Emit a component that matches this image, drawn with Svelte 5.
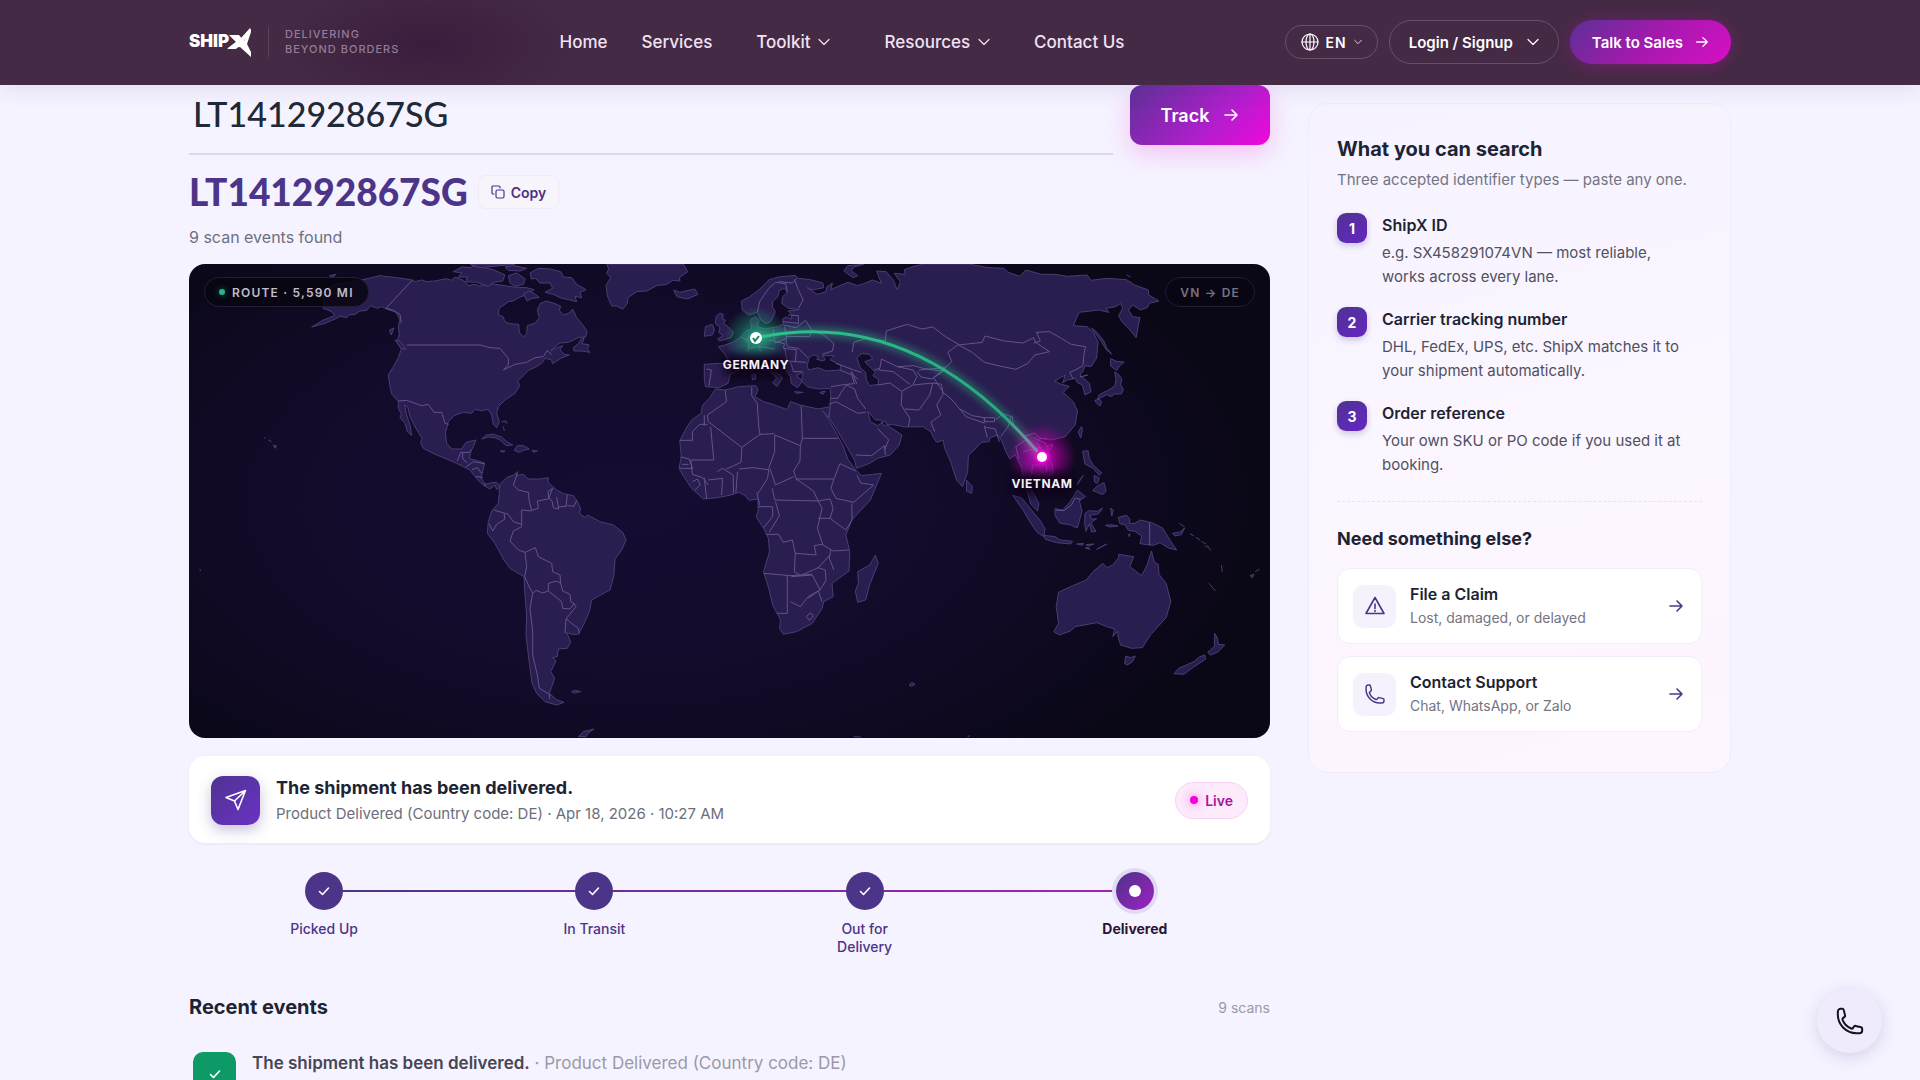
<script>
    let trackingId = $state('LT141292867SG');
    let copied = $state(false);

    const events = [
        { id: 1, title: 'The shipment has been delivered.', detail: 'Product Delivered (Country code: DE)' }
    ];

    const searchTypes = [
        { title: 'ShipX ID', text: 'e.g. SX458291074VN — most reliable, works across every lane.' },
        { title: 'Carrier tracking number', text: 'DHL, FedEx, UPS, etc. ShipX matches it to your shipment automatically.' },
        { title: 'Order reference', text: 'Your own SKU or PO code if you used it at booking.' }
    ];

    const help = [
        { title: 'File a Claim', text: 'Lost, damaged, or delayed', icon: 'alert' },
        { title: 'Contact Support', text: 'Chat, WhatsApp, or Zalo', icon: 'phone' }
    ];

    const steps = [
        { label: 'Picked Up', done: true },
        { label: 'In Transit', done: true },
        { label: 'Out for Delivery', done: true },
        { label: 'Delivered', done: false }
    ];

    // each part of the world is drawn on its own grid and placed by a transform
    const world = [
        {
            name: 'americas',
            place: 'translate(-9 -9) scale(.33333)',
            land: [
                'M440 100 470 88 540 76 600 62 650 68 697 75 705 80 725 75 740 80 765 78 800 71 815 76 824 66 850 76 866 92 885 88 900 94 922 84 960 90 1000 96 1040 98 1062 104 1050 116 1020 126 1000 138 985 140 958 160 954 178 970 186 974 200 990 206 1016 208 1018 232 1030 246 1040 236 1042 212 1066 204 1078 188 1072 165 1082 145 1100 138 1125 146 1142 154 1138 166 1150 180 1168 174 1178 162 1190 188 1205 206 1221 228 1218 245 1195 248 1165 262 1140 264 1125 275 1112 287 1130 278 1148 272 1140 284 1152 298 1168 300 1142 310 1118 326 1114 314 1095 310 1085 325 1060 340 1045 346 1030 362 1012 378 1020 390 1005 415 975 435 955 455 950 475 958 500 950 518 940 507 935 480 925 463 905 467 885 463 875 475 850 472 822 482 805 500 796 535 800 565 815 582 845 582 858 562 888 555 880 575 872 590 868 612 885 615 914 624 908 650 903 668 915 688 935 683 950 682 962 695 950 703 945 690 930 702 912 692 898 680 885 665 870 645 850 635 830 625 800 612 770 600 730 580 722 565 726 550 705 515 690 485 683 455 674 450 680 480 690 510 695 541 682 530 675 505 660 488 664 478 655 460 655 440 636 418 630 395 625 360 640 335 655 308 664 282 650 262 658 240 655 212 660 195 648 172 620 162 605 155 590 160 572 152 560 166 540 168 525 178 505 180 500 188 480 184 470 190 435 205 395 216 430 195 465 182 455 170 430 160 430 120Z',
                'M820 50 845 36 870 38 885 32 940 44 975 60 968 78 940 82 925 94 890 82 858 80 862 66 835 66 846 54Z',
                'M1050 54 1075 40 1110 42 1142 50 1150 66 1175 68 1190 88 1218 104 1200 112 1205 128 1185 124 1190 140 1165 134 1140 128 1120 118 1095 112 1118 100 1110 84 1080 84 1066 70 1054 72Z',
                'M985 62 1010 54 1036 72 1030 88 1005 94 990 84Z',
                'M1030 118 1048 108 1066 118 1078 128 1055 130 1042 138Z',
                'M975 36 1000 32 1040 40 1020 48 985 46Z',
                'M870 28 900 38 960 32 1005 28Z',
                'M1280 27 1286 42 1280 55 1292 68 1286 78 1278 92 1282 122 1295 153 1310 153 1328 163 1342 145 1344 128 1370 110 1400 108 1430 92 1460 88 1478 76 1500 78 1498 68 1523 50 1510 27Z',
                'M1180 278 1195 266 1204 252 1213 248 1206 266 1228 270 1222 280 1230 292 1205 288 1182 288Z',
                'M645 255 662 260 678 284 664 280Z',
                'M628 225 642 219 638 228 634 240Z',
                'M448 62 468 58 460 66Z',
                'M905 552 918 540 940 538 965 546 980 560 998 570 978 572 962 556 945 548 925 546Z',
                'M1003 586 1012 572 1030 572 1048 582 1030 586 1018 592Z',
                'M960 587 975 588 968 592Z M1057 586 1072 588 1060 592Z',
                'M965 500 978 498 982 506 M970 515 973 528 M252 548 256 550 M265 555 275 560 M280 570 290 573 285 580Z M60 942 61 948',
                'M958 700 960 688 980 668 1000 660 1014 650 1008 662 1030 658 1045 672 1080 672 1105 668 1104 682 1130 705 1150 716 1180 722 1195 745 1202 762 1198 775 1215 788 1222 780 1260 800 1300 810 1328 832 1338 855 1325 885 1305 912 1302 960 1290 1005 1265 1018 1235 1035 1228 1070 1210 1110 1195 1138 1175 1138 1160 1132 1172 1160 1162 1180 1135 1182 1132 1205 1118 1208 1128 1218 1112 1250 1124 1270 1114 1298 1108 1315 1130 1334 1152 1342 1130 1350 1095 1340 1070 1315 1056 1284 1050 1240 1045 1200 1038 1140 1040 1080 1035 1020 1032 965 990 940 972 915 945 865 922 835 925 800 935 768 955 745 958 715Z',
                'M1175 1310 1185 1306 1202 1310 1180 1314Z',
                'M1195 1445 1210 1430 1242 1422 1225 1434 1218 1445Z'
            ],
            borders: [
                'M697 75 618 160 640 166 660 178 664 205',
                'M680 270H900L930 278 960 280 985 310 985 330 970 345 1005 328 1040 322 1065 308 1090 305 1102 286 1115 300',
                'M655 438 680 436 725 452 745 448 762 472 785 472 795 505 806 508',
                'M832 618 842 592 868 592 875 585M848 592 V612L862 624M858 636 880 620 912 626M876 644 892 638 905 655M888 664 908 668M915 685V692',
                'M1012 655 1000 690 1015 705 1045 712 1048 740 1055 766 1075 760 1072 738 1105 732 1118 700',
                'M1118 700 1104 710 1106 728 1116 738 1120 758 1136 762 1130 726M1136 756 1158 754 1162 720M1162 752 1182 754 1190 736',
                'M1055 768 1025 765 1025 815 1000 828 990 858 1015 885 1035 892 1066 878 1075 905 1115 925 1118 950 1140 960 1142 985',
                'M942 765 985 778 1000 800 1025 808M928 806 938 828 950 808 975 792 972 776',
                'M1035 892 1040 935 1034 965 1045 990 1058 1015 1050 1060 1058 1130 1058 1200 1072 1260 1078 1300 1112 1320',
                'M1058 1015 1068 1006 1088 1014 1105 1008 1105 985 1130 978 1142 985 1148 1008 1170 1018 1172 1040 1182 1046 1170 1062 1148 1060 1145 1040 1105 1008',
                'M1182 1046 1188 1055 1158 1092 1195 1120 1198 1136M1158 1092 1155 1135M1108 1318V1332'
            ]
        },
        {
            name: 'old-world',
            place: 'translate(471 -9) scale(.39541 .33333)',
            land: [
                // Europe and Asia, with the Black and Caspian seas cut out
                'M112 328 150 325 178 328 165 300 148 275 165 270 185 262 205 245 218 228 232 222 228 195 240 185 250 195 246 215 265 222 300 215 312 205 310 192 320 186 332 192 334 178 324 168 352 164 325 160 308 145 310 125 322 112 315 100 302 106 298 125 285 140 284 155 292 170 284 190 280 200 268 206 255 195 246 172 225 180 208 165 206 138 226 126 250 105 275 75 300 66 342 61 350 70 380 74 412 84 414 98 385 105 372 98 388 110 398 118 420 110 422 96 436 84 432 104 455 92 475 82 500 92 520 84 538 75 560 85 552 62 548 48 572 50 590 75 600 105 608 80 592 55 620 58 618 44 640 35 665 27H780L830 38 870 40 880 52 910 64 925 45 965 58 1000 58 1030 64 1080 60 1090 76 1130 70 1180 74 1200 90 1235 105 1236 120 1262 138 1238 145 1232 158 1215 165 1195 150 1185 165 1195 185 1214 188 1210 210 1204 248 1185 220 1168 200 1160 182 1170 160 1165 145 1152 155 1128 160 1135 172 1110 165 1060 172 1045 212 1080 215 1096 232 1108 262 1104 310 1090 335 1075 332 1070 348 1062 360 1086 385 1090 410 1075 420 1068 390 1055 382 1050 370 1030 375 1018 384 1025 360 998 378 1015 388 1035 394 1020 412 1045 440 1056 468 1050 510 1025 545 990 555 965 550 955 560 970 595 992 625 995 655 970 672 955 662 940 655 930 690 948 722 958 745 955 768 938 748 930 715 918 680 915 640 905 615 898 600 885 612 875 590 865 560 855 540 835 548 832 560 812 562 795 585 780 600 778 650 765 695 750 675 735 620 720 580 716 555 700 562 690 545 685 530 665 515 620 516 585 508 565 512 560 495 545 495 525 468 532 500 550 512 568 498 580 515 612 540 605 570 582 600 550 610 530 625 497 640 492 615 470 570 450 530 428 488 430 455 432 420 430 400 400 402 372 395 358 378 362 352 345 362 360 378 348 398 332 385 330 365 318 345 300 338 292 350 310 368 296 394 285 384 295 370 280 350 255 335 240 340 200 345 178 358 172 385 150 398 115 395 112 370Z' +
                'M372 332 378 305 390 300 402 306 396 312 410 318 418 314 412 302 440 302 430 314 458 332 455 345 420 348 400 338 376 345Z' +
                'M498 308 510 296 530 298 538 312 518 320 545 352 538 362 552 372 552 388 530 392 522 376 520 352 506 338Z',
                'M430 455 400 462 355 450 330 440 322 464 290 450 262 440 240 425 248 405 242 392 200 395 165 405 140 402 125 430 108 450 104 475 80 495 66 520 50 558 54 605 48 640 60 665 80 700 110 732 145 728 180 720 200 712 215 722 225 736 248 732 248 770 243 785 262 820 274 850 277 890 262 950 275 1000 285 1050 305 1095 302 1120 312 1138 345 1130 385 1105 410 1060 414 1040 438 1025 435 985 478 948 480 890 470 840 485 795 532 735 560 655 510 662 495 645 475 612 462 570 430 500 410 465 426 488Z',
                'M545 900 552 925 530 990 520 1035 500 1042 494 1008 502 985 500 950 530 930Z',
                'M35 105 50 112 88 102 96 118 70 132 44 126 38 114Z',
                'M150 175 160 178 158 192 166 196 160 205 172 215 186 232 180 248 150 258 146 252 160 242 148 232 152 218 140 205 142 185Z',
                'M115 215 132 208 138 225 132 240 112 244Z',
                'M515 28 490 36 484 48 500 62 488 68 465 48 475 32Z',
                'M775 675 790 695 788 715 775 708Z',
                'M340 410 362 412 345 415Z M404 412 418 408 412 418Z M232 360 242 358 242 372 234 374Z',
                'M1008 1012 1038 995 1078 975 1095 950 1120 925 1130 938 1145 930 1160 908 1160 898 1198 905 1188 935 1218 962 1232 930 1243 888 1250 922 1260 928 1262 958 1280 985 1292 1040 1280 1088 1240 1140 1220 1178 1192 1180 1165 1170 1158 1145 1158 1128 1145 1145 1150 1122 1130 1115 1105 1103 1050 1115 1038 1128 1010 1140 996 1130 1008 1105 1002 1055Z',
                'M1178 1203 1190 1208 1202 1203 1195 1220 1182 1230 1175 1226Z',
                'M1403 1135 1410 1150 1412 1168 1428 1170 1410 1192 1392 1200 1385 1192 1402 1175Z',
                'M1378 1200 1380 1212 1345 1240 1325 1258 1300 1256 1312 1240 1350 1220 1365 1205Z',
                'M1388 985 1405 1008 M1420 930 1422 950 M1492 962 1502 958 1498 968Z M1505 950 1516 943 M630 1290 637 1282 645 1288 635 1294Z M490 1445 508 1446 M778 1445 784 1442',
                'M1180 60 1190 66'
            ],
            borders: [
                // Europe
                'M246 172 252 140 275 100 292 82 318 86 322 112M300 80 335 84 345 70M340 74 350 105 362 135 350 160M118 342 130 345 124 392',
                'M325 180 350 182 350 205 310 200M312 210 345 218 368 196 385 228 378 245 318 244M315 215 320 250 290 264M385 228 412 238 440 266 436 288 410 298M318 252 322 275 350 280 374 308',
                'M275 255 315 266 312 280 345 284 342 322M315 278 322 318 370 322M225 240 218 262M286 222 290 256M205 246 226 258 222 290M330 320 338 350 360 350M222 280 250 275 290 282M250 275 255 290',
                // Middle East
                'M432 395 472 388 492 386 485 360 455 345M445 325 490 345 510 352M480 350 502 374M485 350 498 388M432 430 450 430 458 412 472 390M472 390 492 402 500 430 520 462M428 448 445 440 500 475 520 472M495 600 535 602 568 572 570 600M550 520 578 555 568 585',
                // Central and South Asia
                'M550 390 582 384 612 410 610 450 632 490 628 515M612 408 640 390 690 384 682 420 655 465 620 462M552 345 590 350 632 388M486 292 490 262 522 250 570 258 572 228 625 208 662 222 690 216 722 245 755 268 728 292 738 320 712 348 665 340 642 332 600 335 560 312 556 340 542 345M655 345 722 338 688 372 660 366 650 350M600 335 640 345 650 365 640 388',
                'M690 384 712 388 716 418 700 450 710 480 685 502 695 530M722 345 692 368 718 415 735 430 758 462M758 462 790 482 820 488 820 504 775 486ZM820 488H846V500H822ZM820 512 828 548M820 516 848 522 858 560',
                'M848 495 868 476 888 485 880 515 862 545M890 482 895 515 922 548M908 612 900 575 925 555M922 545 935 575 950 600M918 590 962 578M945 548 975 565 988 612M940 655 942 630 978 630 978 650M918 545 948 534 960 550 980 552',
                // China, Mongolia, Korea
                'M755 270 815 262 822 243 870 258 918 264 945 248 950 262 985 290 948 300 930 325 900 343 855 332 820 322 790 292Z',
                'M945 264 962 258 952 232 985 230 1018 252 1040 268 1076 275 1072 300 1070 330M1070 332 1050 345 1036 352 1045 372M1062 366 1082 360',
                // Africa
                'M165 405 168 440 120 480 122 500 207 577 253 538 290 536M232 396 232 422 246 445 250 520 253 538M50 556H82V530L100 508H120M112 480 112 512M128 515 136 615H78M207 577 205 622 168 642',
                'M290 540 355 572 360 550 357 452M360 550H450M355 572 354 618 338 648 346 676M290 540 290 590 275 640M200 642 235 638 275 644 272 670 248 715M278 640 292 690 338 665M284 700 290 735 400 738 388 708 345 672 440 672 455 626 495 648',
                'M440 672 432 700 445 730 490 742 540 690 508 684 498 660M485 745 486 795 470 825 430 790 438 760 430 732 400 738 410 760 398 820M400 790H430M398 820 412 870 438 888 478 885M292 740 302 782 276 832M270 838H300L312 862 335 855 342 895 395 900 390 872 412 868',
                'M262 955 330 962 385 958M342 895 340 950 355 962 400 938 430 900M432 885 428 910 440 945M400 938 418 945 420 975 405 1005M322 962V1075H296M332 965 385 960 405 1005 375 1025 355 1055 330 1040M375 1030 400 1008 410 1040M370 1085 380 1074 388 1082 378 1096Z',
                'M52 606 74 612 82 640 50 640M78 615 82 658 108 668 122 690M82 680 95 672 102 690 88 705M112 668 118 732M122 675 158 670 156 720M145 650 158 640 185 660 186 715M196 650 192 712M248 755H285V785L262 818M56 628H72M245 712 252 750'
            ]
        },
        {
            name: 'pacific',
            place: 'translate(771 -2) scale(.33333)',
            land: [
                'M395 198 412 212 432 238 440 258 455 276 438 262 425 240Z',
                'M452 290 470 298 492 300 478 312 470 326 452 312Z',
                'M464 330 478 340 485 352 482 368 490 384 484 396 462 396 455 404 440 398 425 406 412 412 418 398 442 386 465 372 468 350Z',
                'M404 415 418 412 424 420 420 432 410 424Z',
                'M355 510 364 494 368 502 362 528Z M262 552 278 546 276 558 268 564Z',
                'M368 568 384 566 388 590 400 610 425 632 418 640 398 618 375 606Z',
                'M402 640 418 648 412 664 404 660Z M398 686 412 672 432 662 438 688 428 698 410 690Z M370 640 352 668 360 652Z',
                'M285 740 308 744 330 720 352 684 376 704 358 716 366 748 352 798 330 788 300 784 285 760Z',
                'M158 700 185 708 215 745 240 775 255 800 252 824 232 812 210 780 190 745Z',
                'M250 820 285 824 300 834 338 838 332 846 290 842 256 832Z',
                'M375 754 388 746 412 748 428 738 415 756 388 760 396 772 410 770 392 782 408 808 395 810 388 785 378 808 374 785Z',
                'M475 766 500 760 510 772 508 784 525 784 540 774 575 782 608 798 618 815 632 838 650 864 625 858 600 842 580 850 540 845 545 822 525 808 505 805 495 788 480 785Z',
                'M638 814 660 810 674 798 664 818 645 822Z M452 738 460 745 455 762Z M436 790 452 788 474 792 450 795Z M505 818 510 815 508 824Z',
                'M350 846 370 844 368 850Z M378 848 402 846 385 852Z M410 862 440 846 425 854Z M375 858 385 856 390 862Z',
                'M658 784 674 795 M690 815 702 822 M708 826 720 834 M724 838 738 846 M742 850 752 866 M734 852 742 856'
            ],
            borders: ['M569 782V850M288 744 312 746 335 728 345 708 362 712']
        }
    ];

    const copyId = async () => {
        await navigator.clipboard?.writeText(trackingId);
        copied = true;
    };
</script>

{#snippet arrow(size)}
    <svg width={size} height={size} viewBox="0 0 16 16" class="stroke" aria-hidden="true">
        <path d="M2 8h12M9 3l5 5-5 5" />
    </svg>
{/snippet}

{#snippet chevron(size)}
    <svg width={size} height={size} viewBox="0 0 12 12" class="stroke thin" aria-hidden="true">
        <path d="M1 3.5l5 5 5-5" />
    </svg>
{/snippet}

{#snippet check()}
    <svg width="14" height="14" viewBox="0 0 14 14" class="stroke" aria-hidden="true">
        <path d="M2.5 7.5l3 3 6-6.5" />
    </svg>
{/snippet}

{#snippet phone(size)}
    <svg width={size} height={size} viewBox="0 0 24 24" class="stroke" aria-hidden="true">
        <path d="M2.25 6.75c0 8.284 6.716 15 15 15h2.25a2.25 2.25 0 0 0 2.25-2.25v-1.372c0-.516-.351-.966-.852-1.091l-4.423-1.106c-.44-.11-.902.055-1.173.417l-.97 1.293c-.282.376-.769.542-1.21.38a12.035 12.035 0 0 1-7.143-7.143c-.162-.441.004-.928.38-1.21l1.293-.97c.363-.271.527-.734.417-1.173L6.963 3.102a1.125 1.125 0 0 0-1.091-.852H4.5A2.25 2.25 0 0 0 2.25 4.5z" />
    </svg>
{/snippet}

<div class="page">
    <header>
        <div class="wrap bar">
            <a class="brand" href="/" aria-label="ShipX">
                <svg width="63" height="30" viewBox="0 0 63 30" aria-hidden="true">
                    <text x="0" y="20" class="logo-text">SHIP</text>
                    <path d="M40 8h10l5 6 7-13v4l-4 12 4 8v5L51 20l-6 1h-6l8-6z" fill="#fff" />
                    <path d="M61 1v6L47 22h-9L52 11z" fill="#fff" />
                </svg>
                <span class="tagline">Delivering<br />Beyond Borders</span>
            </a>
            <nav aria-label="Main">
                <a href="/">Home</a>
                <a href="/services">Services</a>
                <button class="menu">Toolkit {@render chevron(12)}</button>
                <button class="menu">Resources {@render chevron(12)}</button>
                <a href="/contact">Contact Us</a>
            </nav>
            <div class="actions">
                <button class="pill lang">
                    <svg width="18" height="18" viewBox="0 0 18 18" class="stroke thin" aria-hidden="true">
                        <circle cx="9" cy="9" r="8" />
                        <ellipse cx="9" cy="9" rx="4" ry="8" />
                        <path d="M1 9h16M9 1v16" />
                    </svg>
                    EN {@render chevron(8)}
                </button>
                <button class="pill login">Login / Signup {@render chevron(12)}</button>
                <a class="sales" href="/sales">Talk to Sales {@render arrow(14)}</a>
            </div>
        </div>
    </header>

    <main class="wrap columns">
        <section class="tracking">
            <form onsubmit={(e) => e.preventDefault()}>
                <input type="text" bind:value={trackingId} aria-label="Tracking number" spellcheck="false" />
                <button class="track">Track {@render arrow(16)}</button>
            </form>

            <div class="result">
                <h1>{trackingId}</h1>
                <button class="copy" onclick={copyId}>
                    <svg width="14" height="14" viewBox="0 0 14 14" class="stroke thin" aria-hidden="true">
                        <rect x="5" y="5" width="8" height="8" rx="1.5" />
                        <path d="M3 9H2a1 1 0 0 1-1-1V2a1 1 0 0 1 1-1h6a1 1 0 0 1 1 1v1" />
                    </svg>
                    {copied ? 'Copied' : 'Copy'}
                </button>
            </div>
            <p class="count">9 scan events found</p>

            <div class="map">
                <svg viewBox="0 0 1081 474" role="img" aria-label="Route from Vietnam to Germany">
                    <defs>
                        <radialGradient id="glow-green">
                            <stop offset="0" stop-color="#1fc48a" stop-opacity=".85" />
                            <stop offset=".5" stop-color="#1fa878" stop-opacity=".4" />
                            <stop offset="1" stop-color="#1fa878" stop-opacity="0" />
                        </radialGradient>
                        <radialGradient id="glow-pink">
                            <stop offset="0" stop-color="#f000d8" stop-opacity=".95" />
                            <stop offset=".5" stop-color="#c800b4" stop-opacity=".5" />
                            <stop offset="1" stop-color="#b000a0" stop-opacity="0" />
                        </radialGradient>
                        <linearGradient id="route" gradientUnits="userSpaceOnUse" x1="566" y1="74" x2="853" y2="193">
                            <stop offset="0" stop-color="#2bc48d" />
                            <stop offset=".85" stop-color="#27a87c" />
                            <stop offset="1" stop-color="#b08fc0" stop-opacity=".7" />
                        </linearGradient>
                        <filter id="soft" x="-20%" y="-40%" width="140%" height="180%">
                            <feGaussianBlur stdDeviation="4" />
                        </filter>
                    </defs>
                    {#each world as part (part.name)}
                        <g transform={part.place}>
                            {#each part.land as d}
                                <path class="land" {d} />
                            {/each}
                            {#each part.borders as d}
                                <path class="border" {d} />
                            {/each}
                        </g>
                    {/each}
                    <circle cx="567" cy="74" r="32" fill="url(#glow-green)" />
                    <circle cx="853" cy="193" r="34" fill="url(#glow-pink)" />
                    <path class="route-glow" d="M567 74Q725 40 853 193" filter="url(#soft)" />
                    <path class="route" d="M567 74Q725 40 853 193" />
                    <circle cx="567" cy="74" r="6" fill="#fff" />
                    <path d="M564 74l2 3 4-5" fill="none" stroke="#138a60" stroke-width="2" />
                    <circle cx="853" cy="193" r="7" fill="#f000d8" />
                    <circle cx="853" cy="193" r="5" fill="#fff" />
                    <rect class="shade" x="536" y="91" width="62" height="20" filter="url(#soft)" />
                    <rect class="shade" x="822" y="210" width="62" height="20" filter="url(#soft)" />
                    <text class="place" x="567" y="105">GERMANY</text>
                    <text class="place" x="853" y="224">VIETNAM</text>
                </svg>
                <div class="chips">
                    <span class="chip"><i class="dot green"></i>Route · 5,590 mi</span>
                    <span class="chip faint">VN → DE</span>
                </div>
            </div>

            <article class="status">
                <span class="status-icon">
                    <svg width="22" height="22" viewBox="0 0 22 22" class="stroke" aria-hidden="true">
                        <path d="M1 8.5L20.5 1.5 13 20.5 9.5 12zM20.5 1.5L9.5 12" />
                    </svg>
                </span>
                <div class="grow">
                    <h2>The shipment has been delivered.</h2>
                    <p>Product Delivered (Country code: DE) · Apr 18, 2026 · 10:27 AM</p>
                </div>
                <span class="live"><i class="dot"></i>Live</span>
            </article>

            <ol class="steps">
                {#each steps as step (step.label)}
                    <li class:current={!step.done}>
                        <span class="node">
                            {#if step.done}{@render check()}{:else}<i></i>{/if}
                        </span>
                        <span class="label">{step.label}</span>
                    </li>
                {/each}
            </ol>

            <div class="events-head">
                <h2>Recent events</h2>
                <span>9 scans</span>
            </div>
            <ul class="events">
                {#each events as event (event.id)}
                    <li>
                        <span class="event-icon">{@render check()}</span>
                        <p><strong>{event.title}</strong> · {event.detail}</p>
                    </li>
                {/each}
            </ul>
        </section>

        <aside>
            <h2>What you can search</h2>
            <p class="lead">Three accepted identifier types — paste any one.</p>
            <ol class="types">
                {#each searchTypes as type, i (type.title)}
                    <li>
                        <span class="num">{i + 1}</span>
                        <div>
                            <h3>{type.title}</h3>
                            <p>{type.text}</p>
                        </div>
                    </li>
                {/each}
            </ol>
            <h2 class="more">Need something else?</h2>
            <div class="links">
                {#each help as item (item.title)}
                    <a href="/support">
                        <span class="link-icon">
                            {#if item.icon === 'phone'}
                                {@render phone(22)}
                            {:else}
                                <svg width="22" height="22" viewBox="0 0 22 22" class="stroke" aria-hidden="true">
                                    <path d="M11 2.5L20 18.5H2zM11 9v4.5M11 15.5v1" />
                                </svg>
                            {/if}
                        </span>
                        <span class="grow">
                            <b>{item.title}</b>
                            <small>{item.text}</small>
                        </span>
                        {@render arrow(16)}
                    </a>
                {/each}
            </div>
        </aside>
    </main>

    <button class="call" aria-label="Call us">{@render phone(30)}</button>
</div>

<style>
:global(body) {
    background: #f5f3ff;
}
.page {
    height: 100vh;
    overflow: hidden;
    font-family: Inter, "Liberation Sans", sans-serif;
    color: #1c2433;
}
h1, h2, h3, p, ol, ul {
    margin: 0;
    padding: 0;
}
ol, ul {
    list-style: none;
}
a {
    color: inherit;
    text-decoration: none;
}
button {
    font: inherit;
    color: inherit;
    background: none;
    border: 0;
    padding: 0;
    cursor: pointer;
}
.stroke {
    fill: none;
    stroke: currentColor;
    stroke-width: 1.6;
    stroke-linecap: round;
    stroke-linejoin: round;
    flex: none;
}
.stroke.thin {
    stroke-width: 1.2;
}
.wrap {
    width: min(100% - 48px, 1542px);
    margin: 0 auto;
}
.grow {
    flex: 1;
    min-width: 0;
}

header {
    position: relative;
    background: radial-gradient(ellipse 150px 70px at 430px 45px, rgba(58, 26, 60, 0.9), rgba(58, 26, 60, 0)), #442a44;
    box-shadow: 0 4px 20px rgba(80, 60, 140, 0.12);
    color: #f0e2f4;
}
.bar {
    height: 85px;
    padding-bottom: 1px;
    box-sizing: border-box;
    display: flex;
    align-items: center;
    justify-content: space-between;
}
.brand {
    display: flex;
    align-items: center;
    gap: 16px;
}
.logo-text {
    font: 900 17px Inter, sans-serif;
    fill: #fff;
}
.tagline {
    padding-left: 16px;
    border-left: 1px solid #5b435c;
    font-size: 11px;
    line-height: 15px;
    font-weight: 500;
    letter-spacing: 1px;
    text-transform: uppercase;
    color: #927c96;
}
nav {
    display: flex;
    align-items: center;
    gap: 34px;
    font-size: 17px;
    font-weight: 500;
}
.menu {
    display: flex;
    align-items: center;
    gap: 8px;
    padding: 0 10px;
}
.actions {
    display: flex;
    align-items: center;
    gap: 11px;
    font-size: 15px;
    font-weight: 600;
    color: #fff;
}
.pill, .sales {
    display: flex;
    align-items: center;
    box-sizing: border-box;
    border-radius: 22px;
}
.pill {
    border: 1px solid #694f6b;
}
.lang {
    height: 34px;
    padding: 0 15px;
    gap: 7px;
    font-size: 14px;
    letter-spacing: 1px;
}
.login {
    height: 44px;
    padding: 0 19px;
    gap: 14px;
}
.sales {
    height: 44px;
    padding: 0 22px;
    gap: 12px;
    background: linear-gradient(135deg, #5b3196, #a519ad 50%, #d80fc6);
    box-shadow: 0 2px 16px rgba(200, 20, 190, 0.35);
}

.columns {
    display: grid;
    grid-template-columns: minmax(0, 1fr) 423px;
    gap: 38px;
    align-items: start;
}
form {
    display: flex;
    align-items: flex-start;
    gap: 17px;
}
input {
    flex: 1;
    min-width: 0;
    height: 70px;
    box-sizing: border-box;
    padding: 0 4px 12px;
    border: 0;
    border-bottom: 2px solid #dcd9ea;
    background: none;
    outline: none;
    font: 500 34px Lato, sans-serif;
    color: #1f2937;
}
.track {
    display: flex;
    align-items: center;
    justify-content: center;
    gap: 14px;
    width: 140px;
    height: 60px;
    border-radius: 12px;
    background: linear-gradient(135deg, #5b3196, #b01fcc 60%, #f007dc);
    box-shadow: 0 8px 24px rgba(240, 60, 220, 0.28);
    color: #fff;
    font-size: 18px;
    font-weight: 600;
}
.result {
    display: flex;
    align-items: center;
    gap: 10px;
    margin-top: 13px;
}
h1 {
    font: 900 37px/48px Lato, sans-serif;
    color: #4c3588;
}
.copy {
    display: flex;
    align-items: center;
    gap: 6px;
    height: 34px;
    padding: 0 12px;
    border: 1px solid #efecf8;
    border-radius: 8px;
    background: #f7f4fc;
    color: #4a3385;
    font-size: 14px;
    font-weight: 600;
}
.count {
    margin-top: 9px;
    font-size: 16px;
    line-height: 24px;
    color: #6b7080;
}

.map {
    position: relative;
    margin-top: 15px;
    border-radius: 16px;
    overflow: hidden;
    background: radial-gradient(ellipse 60% 75% at 40% 50%, #150d32, #120b29 55%, #0a0716);
}
.map > svg {
    display: block;
    width: 100%;
}
.land {
    fill: #2a1d4f;
    fill-rule: evenodd;
    stroke: #4b3d72;
    stroke-width: 1;
    vector-effect: non-scaling-stroke;
}
.border {
    fill: none;
    stroke: #64538e;
    stroke-width: 1;
    vector-effect: non-scaling-stroke;
}
.route, .route-glow {
    fill: none;
    stroke: url(#route);
    stroke-width: 3;
}
.route-glow {
    stroke-width: 6;
    opacity: 0.7;
}
.shade {
    fill: #080512;
}
.place {
    font: 700 12px Inter, sans-serif;
    letter-spacing: 0.05em;
    text-anchor: middle;
    fill: #f3f0fa;
}
.chips {
    position: absolute;
    inset: 13px 15px auto;
    display: flex;
    justify-content: space-between;
}
.chip {
    display: flex;
    align-items: center;
    gap: 7px;
    height: 30px;
    box-sizing: border-box;
    padding: 0 14px;
    border: 1px solid #241d35;
    border-radius: 15px;
    background: rgba(8, 6, 18, 0.85);
    color: #c0bccb;
    font-size: 12px;
    font-weight: 600;
    letter-spacing: 0.1em;
    text-transform: uppercase;
}
.chip.faint {
    color: #777382;
}
.dot {
    width: 8px;
    height: 8px;
    border-radius: 50%;
    background: #f500d6;
    box-shadow: 0 0 8px 2px rgba(245, 0, 214, 0.3);
}
.dot.green {
    width: 6px;
    height: 6px;
    background: #25b589;
    box-shadow: 0 0 6px rgba(37, 181, 137, 0.6);
}

.status {
    display: flex;
    align-items: center;
    gap: 16px;
    margin-top: 18px;
    padding: 18px 22px 17px;
    border-radius: 16px;
    background: #fff;
    box-shadow: 0 1px 3px rgba(76, 53, 136, 0.08);
}
.status-icon {
    display: grid;
    place-items: center;
    width: 49px;
    height: 49px;
    border-radius: 12px;
    background: linear-gradient(135deg, #4f3391, #6a32c4);
    box-shadow: 0 5px 14px rgba(76, 53, 136, 0.3);
    color: #fff;
}
h2 {
    font-size: 18px;
    line-height: 28px;
    font-weight: 700;
    color: #1c2433;
}
.status p {
    font-size: 15px;
    line-height: 24px;
    color: #6c6f7b;
}
.live {
    display: flex;
    align-items: center;
    gap: 7px;
    height: 37px;
    box-sizing: border-box;
    padding: 0 14px;
    border: 1px solid #f6d3f3;
    border-radius: 19px;
    background: #fdeafb;
    color: #a6189f;
    font-size: 14px;
    font-weight: 600;
}

.steps {
    display: grid;
    grid-template-columns: repeat(4, 1fr);
    margin-top: 29px;
    background: linear-gradient(90deg, #4c3588, #a324b4) center 18px / 75% 2px no-repeat;
}
.steps li {
    display: flex;
    flex-direction: column;
    align-items: center;
    gap: 10px;
    color: #4c3588;
}
.node {
    display: grid;
    place-items: center;
    width: 38px;
    height: 38px;
    border-radius: 50%;
    background: #4c3588;
    color: #fff;
}
.label {
    max-width: 80px;
    font-size: 14px;
    line-height: 18px;
    font-weight: 500;
    text-align: center;
}
.current .node {
    background: linear-gradient(135deg, #4c3588, #a01fc4);
    box-shadow: 0 0 0 4px #e0daf3;
}
.current i {
    width: 12px;
    height: 12px;
    border-radius: 50%;
    background: #fff;
}
.current .label {
    color: #2e1433;
    font-weight: 700;
}
.events-head {
    display: flex;
    align-items: center;
    justify-content: space-between;
    margin-top: 36px;
    font-size: 14px;
    color: #9a99a8;
}
.events-head h2, aside h2 {
    font-size: 20px;
    line-height: 30px;
}
.events li {
    display: flex;
    gap: 16px;
    padding: 30px 4px 0;
}
.event-icon {
    display: grid;
    place-items: center;
    width: 43px;
    height: 43px;
    border-radius: 10px;
    background: #0e9a66;
    color: #fff;
}
.events p {
    font-size: 17px;
    line-height: 22px;
    color: #9a99a8;
}
.events strong {
    font-weight: 600;
    color: #474653;
}

aside {
    margin-top: 18px;
    padding: 30px 28px 40px;
    box-sizing: border-box;
    border: 1px solid #efebfb;
    border-radius: 20px;
    background: linear-gradient(165deg, #f6f3ff, #fbf6ff 50%, #fef5fd);
}
.lead {
    margin-top: 4px;
    font-size: 15px;
    line-height: 24px;
    color: #737582;
}
.types {
    display: grid;
    gap: 18px;
    margin-top: 21px;
    padding-bottom: 24px;
    border-bottom: 1px dashed #e9e2f3;
}
.types li {
    display: flex;
    gap: 15px;
}
.num {
    display: grid;
    place-items: center;
    flex: none;
    width: 30px;
    height: 30px;
    border-radius: 9px;
    background: linear-gradient(150deg, #4f3391, #6526c4);
    box-shadow: 0 3px 6px rgba(76, 53, 136, 0.25);
    color: #fff;
    font-size: 14px;
    font-weight: 700;
}
h3 {
    font-size: 16px;
    line-height: 24px;
    font-weight: 600;
}
.types p {
    max-width: 310px;
    padding-top: 4px;
    font-size: 15px;
    line-height: 24px;
    color: #50505e;
}
aside .more {
    margin-top: 22px;
    font-size: 18px;
}
.links {
    display: grid;
    gap: 12px;
    margin-top: 14px;
}
.links a {
    display: flex;
    align-items: center;
    gap: 14px;
    padding: 13px 17px 13px 15px;
    border: 1px solid #f3edf9;
    border-radius: 13px;
    background: #fff;
    color: #4c3588;
}
.link-icon {
    display: grid;
    place-items: center;
    width: 43px;
    height: 43px;
    border-radius: 10px;
    background: #f5f2fe;
}
.links b, .links small {
    display: block;
    line-height: 24px;
}
.links b {
    color: #1c2433;
    font-size: 16px;
    font-weight: 600;
}
.links small {
    color: #737582;
    font-size: 14px;
}
.call {
    position: fixed;
    right: 38px;
    bottom: 27px;
    display: grid;
    place-items: center;
    width: 65px;
    height: 65px;
    border-radius: 50%;
    background: #f0eafd;
    box-shadow: 0 4px 16px rgba(76, 53, 136, 0.18);
    color: #16131f;
}
</style>
